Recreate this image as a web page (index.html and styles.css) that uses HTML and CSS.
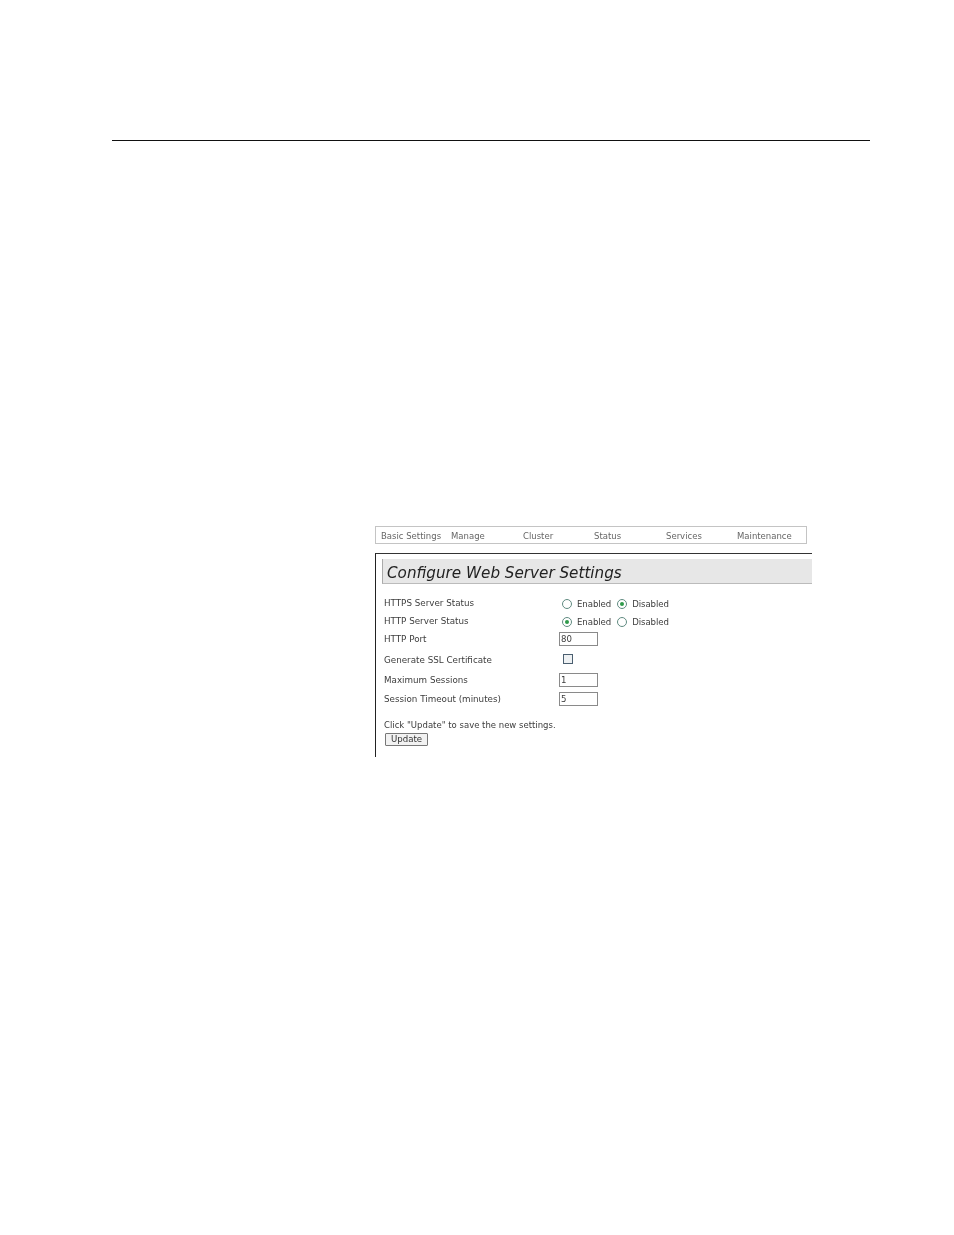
FILE: index.html
```html
<!DOCTYPE html>
<html lang="en">
<head>
<meta charset="utf-8">
<title>Configure Web Server Settings</title>
<link rel="stylesheet" href="styles.css">
</head>
<body>
<div class="page">
  <hr class="rule">
  <div class="shot">
    <nav class="nav">
      <span class="n1">Basic Settings</span>
      <span class="n2">Manage</span>
      <span class="n3">Cluster</span>
      <span class="n4">Status</span>
      <span class="n5">Services</span>
      <span class="n6">Maintenance</span>
    </nav>
    <section class="panel">
      <h1 class="title">Configure Web Server Settings</h1>
      <div class="form">
        <div class="row r1"><span class="label">HTTPS Server Status</span>
          <span class="radios"><i class="radio"></i><span class="opt">Enabled</span><i class="radio on"></i><span class="opt">Disabled</span></span></div>
        <div class="row r2"><span class="label">HTTP Server Status</span>
          <span class="radios"><i class="radio on"></i><span class="opt">Enabled</span><i class="radio"></i><span class="opt">Disabled</span></span></div>
        <div class="row r3"><span class="label">HTTP Port</span><span class="input">80</span></div>
        <div class="row r4"><span class="label">Generate SSL Certificate</span><i class="check"></i></div>
        <div class="row r5"><span class="label">Maximum Sessions</span><span class="input">1</span></div>
        <div class="row r6"><span class="label">Session Timeout (minutes)</span><span class="input">5</span></div>
      </div>
      <p class="hint">Click "Update" to save the new settings.</p>
      <button class="update" type="button">Update</button>
    </section>
  </div>
</div>
</body>
</html>
```
FILE: styles.css
```css
html, body { margin: 0; padding: 0; background: #fff; }
.page { width: 954px; height: 1235px; padding-top: 140px; box-sizing: border-box; overflow: hidden; }
.rule { margin: 0 84px 0 112px; height: 1px; border: 0; background: #111; }
.shot {
  margin: 385px 0 0 375px; width: 437px;
  font-family: "DejaVu Sans", sans-serif; font-size: 8.6px; color: #3c3c3c;
  filter: blur(0.25px);
}
.nav {
  box-sizing: border-box; width: 432px; height: 18px;
  border: 1px solid #c4c4c4; display: flex; align-items: center;
  padding: 2px 0 0 5px; color: #666; font-size: 8.5px;
}
.n1 { width: 70px; } .n2 { width: 72px; } .n3 { width: 71px; }
.n4 { width: 72px; } .n5 { width: 71px; }
.panel {
  margin-top: 9px; height: 204px; box-sizing: border-box;
  border-left: 1px solid #222; border-top: 1px solid #333;
  padding: 5px 0 0 6px;
}
.title {
  margin: 0; height: 25px; box-sizing: border-box;
  background: #e7e7e7; border-left: 1px solid #aaa; border-bottom: 1px solid #bbb;
  padding: 2px 0 0 4px;
  font: italic 400 15.2px/24px "DejaVu Sans", sans-serif; color: #222;
}
.form { margin: 10px 0 0 2px; }
.row { display: flex; align-items: center; height: 18px; }
.r4 { height: 23px; } .r5 { height: 18px; } .r6 { height: 20px; }
.label { width: 175px; flex: none; font-size: 8.75px; }
.radios { display: flex; align-items: center; padding: 2px 0 0 3px; }
.radio {
  box-sizing: border-box; width: 10px; height: 10px; border-radius: 50%;
  border: 1px solid #5f8a80; background: #fff; position: relative; margin-right: 5px;
}
.radio.on::after {
  content: ""; position: absolute; left: 2px; top: 2px;
  width: 4px; height: 4px; border-radius: 50%; background: #2f9a4a;
}
.opt { margin-right: 6px; letter-spacing: -0.08px; }
.opt:last-child { margin-right: 0; }
.input {
  box-sizing: border-box; width: 39px; height: 14px;
  border: 1px solid #8a8a8a; background: #fff; padding-left: 1px; line-height: 12px;
}
.check {
  box-sizing: border-box; width: 10px; height: 10px; margin: -1px 0 0 4px;
  border: 1px solid #4b5f70; background: #eef1f3; display: block;
}
.hint { margin: 10px 0 0 2px; line-height: 12px; font-size: 8.5px; }
.update {
  display: block; margin: 2px 0 0 3px; box-sizing: border-box;
  width: 43px; height: 13px; padding: 0;
  border: 1px solid #777; background: #f2f2f2; border-radius: 1px;
  font: 8.6px/11px "DejaVu Sans", sans-serif; color: #333;
}
```
